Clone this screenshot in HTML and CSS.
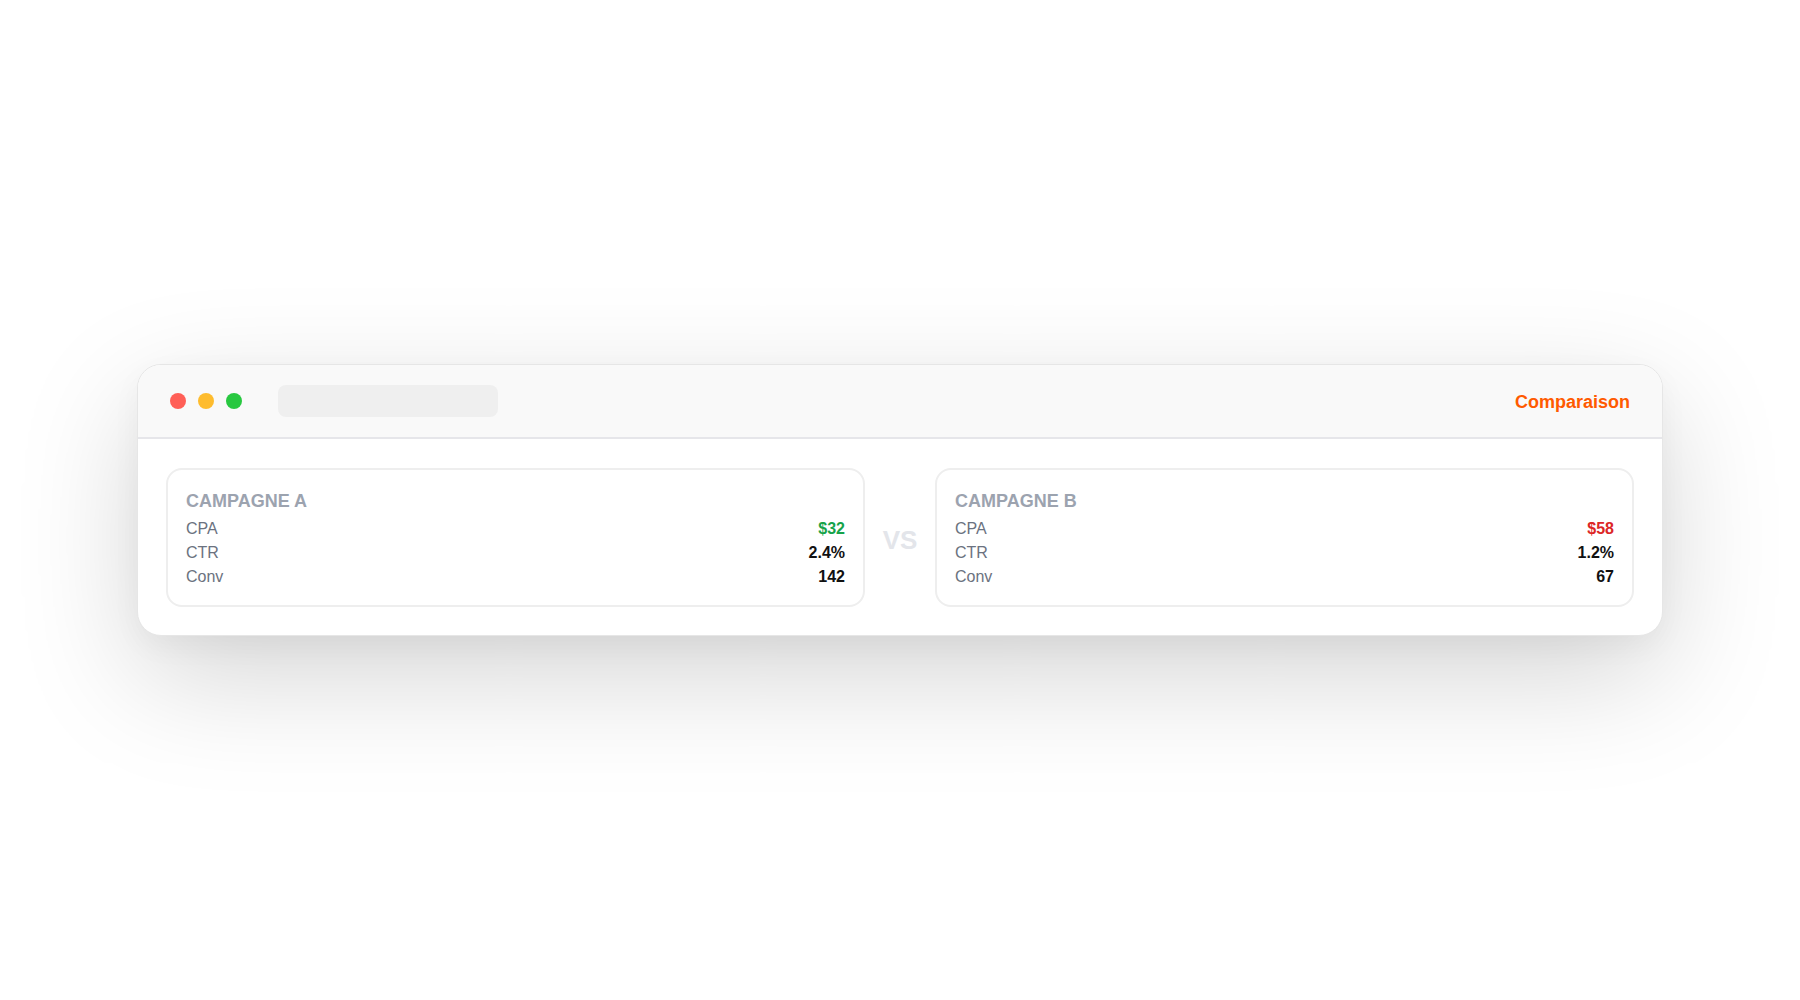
FILE: index.html
```html
<!DOCTYPE html>
<html lang="fr">
<head>
<meta charset="utf-8">
<title>Comparaison</title>
<link rel="stylesheet" href="styles.css">
</head>
<body>
<div class="stage">
  <div class="window">
    <div class="titlebar">
      <div class="dots">
        <span class="dot dot-red"></span>
        <span class="dot dot-yellow"></span>
        <span class="dot dot-green"></span>
      </div>
      <div class="address"></div>
      <div class="title">Comparaison</div>
    </div>
    <div class="content">
      <div class="card">
        <div class="card-title">CAMPAGNE A</div>
        <div class="row"><span class="label">CPA</span><span class="value good">$32</span></div>
        <div class="row"><span class="label">CTR</span><span class="value">2.4%</span></div>
        <div class="row"><span class="label">Conv</span><span class="value">142</span></div>
      </div>
      <div class="vs">VS</div>
      <div class="card">
        <div class="card-title">CAMPAGNE B</div>
        <div class="row"><span class="label">CPA</span><span class="value bad">$58</span></div>
        <div class="row"><span class="label">CTR</span><span class="value">1.2%</span></div>
        <div class="row"><span class="label">Conv</span><span class="value">67</span></div>
      </div>
    </div>
  </div>
</div>
</body>
</html>
```
FILE: styles.css
```css
* { box-sizing: border-box; }
html, body { margin: 0; padding: 0; background: #ffffff; }
body { font-family: "Liberation Sans", Arial, Helvetica, sans-serif; }

.stage {
  min-height: 100vh;
  display: flex;
  align-items: center;
  justify-content: center;
}

.window {
  width: 1526px;
  background: #ffffff;
  border: 1px solid #e6e6e6;
  border-radius: 24px;
  overflow: hidden;
  box-shadow: 0 40px 120px rgba(0, 0, 0, 0.17), 0 10px 30px rgba(0, 0, 0, 0.04);
}

.titlebar {
  height: 74px;
  background: #f9f9f9;
  border-bottom: 2px solid #e6e6ea;
  display: flex;
  align-items: center;
  padding: 0 32px;
}

.dots { display: flex; gap: 12px; }
.dot { width: 16px; height: 16px; border-radius: 50%; display: block; }
.dot-red { background: #ff5f57; }
.dot-yellow { background: #febc2e; }
.dot-green { background: #28c840; }

.address {
  width: 220px;
  height: 32px;
  margin-left: 36px;
  background: #efefef;
  border-radius: 8px;
}

.title {
  margin-left: auto;
  font-size: 18px;
  font-weight: 700;
  color: #ff5a00;
  padding-top: 2px;
}

.content {
  display: flex;
  align-items: center;
  padding: 29px 28px 28px;
}

.card {
  flex: 1;
  border: 2px solid #eeeeee;
  border-radius: 16px;
  padding: 18px 18px 16px;
}

.vs {
  width: 70px;
  text-align: center;
  font-size: 26px;
  font-weight: 700;
  color: #e3e5ea;
  padding-top: 6px;
}

.card-title {
  font-size: 18px;
  font-weight: 700;
  line-height: 27px;
  color: #9ca3af;
  margin-bottom: 2px;
}

.row {
  display: flex;
  justify-content: space-between;
  font-size: 16px;
  line-height: 24px;
}

.label { color: #6b7280; }
.value { font-weight: 700; color: #111111; }
.value.good { color: #16a34a; }
.value.bad { color: #dc2626; }
```
